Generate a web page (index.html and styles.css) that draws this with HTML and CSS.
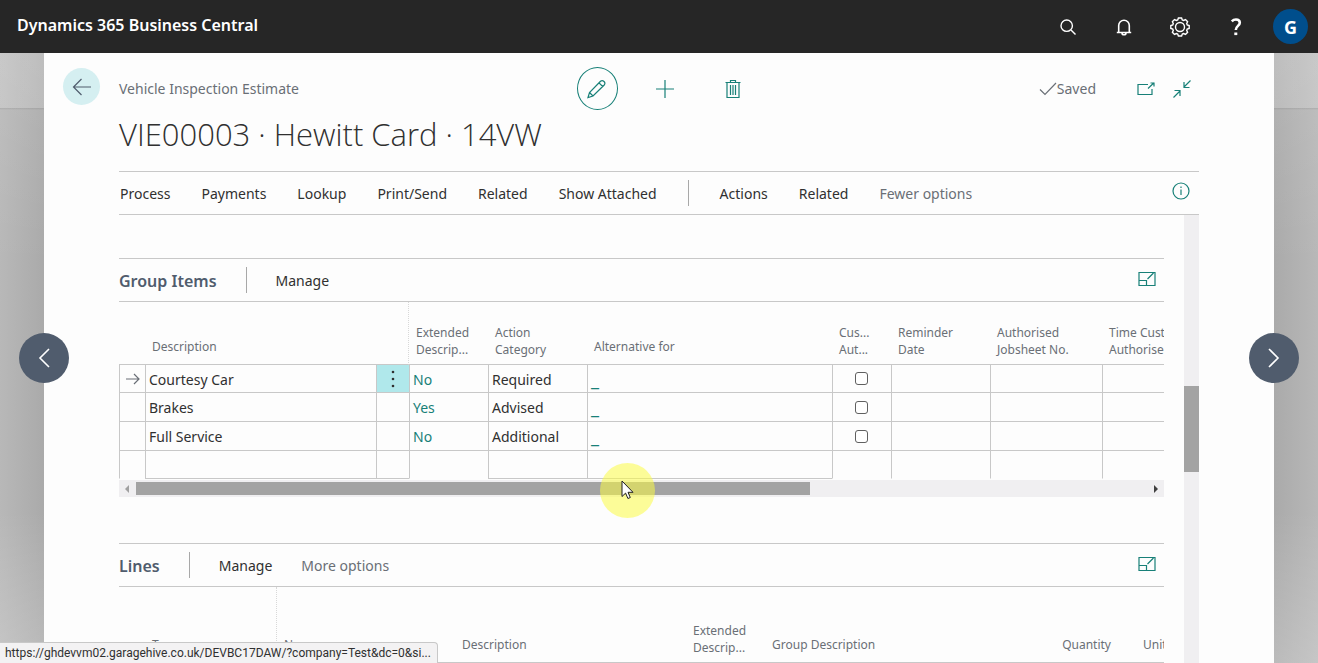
FILE: index.html
```html
<!DOCTYPE html>
<html lang="en">
<head>
<meta charset="utf-8">
<title>Vehicle Inspection Estimate - Dynamics 365 Business Central</title>
<link rel="stylesheet" href="styles.css">
</head>
<body>
<header class="topbar">
  <a class="brand" href="#">Dynamics 365 Business Central</a>
  <div class="topbar-tools">
    <button class="tool" aria-label="Search"><svg width="18" height="18" viewBox="0 0 18 18"><circle cx="7.7" cy="7.7" r="5.7"/><path d="M12 12l4.500 4.500"/></svg></button>
    <button class="tool" aria-label="Notifications"><svg class="bell" width="18" height="18" viewBox="0 0 18 18"><path d="M1.800 14.500H16.200M3.700 14.500V7.500a5.300 5.300 0 0 1 10.600 0v7M7 15a2 1.800 0 0 0 4 0"/></svg></button>
    <button class="tool" aria-label="Settings"><svg width="20" height="20" viewBox="0 0 20 20"><circle cx="10" cy="10" r="4.500"/><path d="M8.400 1h3.200l.7 2 1.300.5 1.900-.9 2.100 2.100-.9 1.900.5 1.300 2 .7v2.800l-2 .7-.5 1.300.9 1.900-2.100 2.100-1.900-.9-1.300.5-.7 2H8.400l-.7-2-1.300-.5-1.900.9-2.100-2.100.9-1.900-.5-1.300-2-.7V8.600l2-.7.5-1.300-.9-1.900 2.100-2.100 1.900.9L7.700 3z"/></svg></button>
    <button class="tool" aria-label="Help"><svg class="help" width="14" height="20" viewBox="0 0 14 20"><path d="M2.800 4.300Q4.500 2.500 7 2.500q3.800 0 3.800 3.200c0 3.200-4 3.300-4 7.300"/><path d="M5.300 16.800h3"/></svg></button>
    <button class="avatar" aria-label="Account">G</button>
  </div>
</header>
<main class="stage">
  <article class="card">
    <div class="back-col"><button class="back" aria-label="Back"><svg width="20" height="18" viewBox="0 0 20 18"><path d="M19 9H1.500M9.500 1L1.500 9l8 8"/></svg></button></div>
    <div class="page">
      <div class="page-head">
        <span class="caption">Vehicle Inspection Estimate</span>
        <div class="page-actions">
          <button class="round ringed" aria-label="Edit"><svg width="20" height="20" viewBox="0 0 20 20"><path d="M1 18.500l1.500-5L13.500 2.300q1.700-1.500 3.500.2 1.700 1.700.2 3.500L6 17zM2.500 13.500L6 17M12 3.800L15.700 7.500"/></svg></button>
          <button class="round" aria-label="New"><svg width="20" height="20" viewBox="0 0 20 20"><path d="M10 1v18M1 10h18"/></svg></button>
          <button class="round" aria-label="Delete"><svg width="16" height="20" viewBox="0 0 16 20"><path d="M.5 3.500h15M5.500 3V1.500h5V3M2 3.500v15h12v-15M5.500 6v10M8 6v10M10.500 6v10"/></svg></button>
        </div>
        <div class="page-state">
          <span class="saved"><svg width="18" height="14" viewBox="0 0 18 14"><path d="M1 7.500l5 5L17 1"/></svg>Saved</span>
          <button class="mini" aria-label="Open in new window"><svg width="18" height="14" viewBox="0 0 18 14"><path d="M11 2.500H1v10h14V7M11 6.500L17 .8M13.500 1H17v3.500"/></svg></button>
          <button class="mini" aria-label="Collapse"><svg width="18" height="18" viewBox="0 0 18 18"><path d="M17.500.5L11 7M11 2v5.500h5.500M.5 17.500L7 11M1.500 10.500H7V16"/></svg></button>
        </div>
      </div>
      <h1 class="title">VIE00003 · Hewitt Card · 14VW</h1>
      <nav class="menu">
        <button>Process</button><button>Payments</button><button>Lookup</button><button>Print/Send</button><button>Related</button><button>Show Attached</button>
        <span class="divider"></span>
        <button>Actions</button><button>Related</button><button class="muted">Fewer options</button>
        <button class="mini info" aria-label="Information"><svg width="18" height="18" viewBox="0 0 18 18"><circle cx="9" cy="9" r="8"/><path d="M9 7.500V13M9 4.500V6"/></svg></button>
      </nav>
      <div class="scroller">
        <div class="parts">
          <section class="part">
            <div class="part-head">
              <h2>Group Items</h2><span class="divider"></span><button>Manage</button>
              <button class="mini expand" aria-label="Expand Group Items"><svg width="18" height="16" viewBox="0 0 18 16"><path d="M1 1.500h16v13H1zM1 9.500h7.500v5M9.500 8l6-6M11.500 1.500H17V6"/></svg></button>
            </div>
            <div class="grid-wrap">
              <table class="grid">
                <colgroup><col class="w26"><col class="w231"><col class="w33"><col class="w79"><col class="w99"><col class="w245"><col class="w59"><col class="w99"><col class="w112"><col></colgroup>
                <thead><tr>
                  <th></th><th class="one">Description</th><th class="frozen"></th><th>Extended<br>Descrip...</th><th>Action<br>Category</th><th class="one">Alternative for</th><th>Cus...<br>Aut...</th><th>Reminder<br>Date</th><th>Authorised<br>Jobsheet No.</th><th>Time Customer<br>Authorised</th>
                </tr></thead>
                <tbody>
                  <tr><td class="mark"><svg width="14" height="12" viewBox="0 0 14 12"><path d="M0 6h13M8 1l5 5-5 5"/></svg></td><td>Courtesy Car</td><td class="more"><button aria-label="More"><svg width="4" height="18" viewBox="0 0 4 18"><circle cx="2" cy="2" r="1.300"/><circle cx="2" cy="9" r="1.300"/><circle cx="2" cy="16" r="1.300"/></svg></button></td><td><a href="#">No</a></td><td>Required</td><td><a class="blank-link" href="#">_</a></td><td class="tick"><input type="checkbox" aria-label="Customer authorised, Courtesy Car"></td><td></td><td></td><td></td></tr>
                  <tr><td></td><td>Brakes</td><td></td><td><a href="#">Yes</a></td><td>Advised</td><td><a class="blank-link" href="#">_</a></td><td class="tick"><input type="checkbox" aria-label="Customer authorised, Brakes"></td><td></td><td></td><td></td></tr>
                  <tr><td></td><td>Full Service</td><td></td><td><a href="#">No</a></td><td>Additional</td><td><a class="blank-link" href="#">_</a></td><td class="tick"><input type="checkbox" aria-label="Customer authorised, Full Service"></td><td></td><td></td><td></td></tr>
                  <tr class="blank"><td></td><td class="edit"></td><td class="edit"></td><td></td><td class="edit"></td><td class="edit"></td><td></td><td></td><td></td><td></td></tr>
                </tbody>
              </table>
            </div>
            <div class="hscroll">
              <svg class="arrow off" width="6" height="8" viewBox="0 0 6 8"><path d="M5 0v8L1 4z"/></svg>
              <div class="htrack"><div class="hthumb"></div></div>
              <svg class="arrow" width="6" height="8" viewBox="0 0 6 8"><path d="M1 0v8l4-4z"/></svg>
            </div>
          </section>
          <section class="part">
            <div class="part-head">
              <h2>Lines</h2><span class="divider"></span><button>Manage</button><button class="muted">More options</button>
              <button class="mini expand" aria-label="Expand Lines"><svg width="18" height="16" viewBox="0 0 18 16"><path d="M1 1.500h16v13H1zM1 9.500h7.500v5M9.500 8l6-6M11.500 1.500H17V6"/></svg></button>
            </div>
            <div class="grid-wrap">
              <table class="grid lines">
                <colgroup><col class="w26"><col class="w132"><col class="w178"><col class="w231"><col class="w79"><col class="w245"><col class="w108"><col></colgroup>
                <thead><tr><th></th><th class="one frozen">Type</th><th class="one">No.</th><th class="one">Description</th><th>Extended<br>Descrip...</th><th class="one">Group Description</th><th class="one num">Quantity</th><th class="one unit">Unit Price</th></tr></thead>
                <tbody><tr><td></td><td></td><td></td><td></td><td></td><td></td><td></td><td></td></tr></tbody>
              </table>
            </div>
          </section>
        </div>
        <div class="vtrack"><div class="vthumb"></div></div>
      </div>
    </div>
  </article>
  <button class="pager prev" aria-label="Previous"><svg width="12" height="20" viewBox="0 0 12 20"><path d="M11 1L2 10l9 9"/></svg></button>
  <button class="pager next" aria-label="Next"><svg width="12" height="20" viewBox="0 0 12 20"><path d="M1 1l9 9-9 9"/></svg></button>
</main>
<div class="pointer"><svg width="13" height="20" viewBox="0 0 13 20"><path d="M1 1v15.500l3.600-3.400 2.300 5.400 2.400-1-2.300-5.200h5z"/></svg></div>
<div class="status">https://ghdevvm02.garagehive.co.uk/DEVBC17DAW/?company=Test&amp;dc=0&amp;si...</div>
</body>
</html>
```
FILE: styles.css
```css
* { box-sizing: border-box; }
body {
  margin: 0;
  height: 100vh;
  display: flex;
  flex-direction: column;
  overflow: hidden;
  position: relative;
  font: 14px/20px "Noto Sans", "Open Sans", sans-serif;
  color: #303030;
}
button {
  border: 0;
  padding: 0;
  background: none;
  font: inherit;
  color: inherit;
  white-space: nowrap;
}
svg { display: block; fill: none; stroke: currentColor; stroke-width: 1.2; }
a { color: #188078; text-decoration: none; }

.topbar {
  flex: none;
  height: 53px;
  display: flex;
  align-items: center;
  justify-content: space-between;
  padding: 0 10px 0 17px;
  background: #262626;
  color: #fff;
}
.brand { color: #fff; font-size: 16px; font-weight: 600; padding-bottom: 4px; }
.topbar-tools { display: flex; align-items: center; }
.tool { width: 56px; height: 40px; display: grid; place-items: center; }
.tool svg { stroke-width: 1.4; }
.tool .bell { stroke-width: 1.6; }
.tool .help { stroke-width: 2.6; }
.avatar {
  width: 35px;
  height: 35px;
  margin-left: 9px;
  border-radius: 50%;
  background: #004e8c;
  font-size: 18px;
  font-weight: 700;
}

.stage {
  flex: 1;
  min-height: 0;
  position: relative;
  padding: 0 44px;
  background:
    linear-gradient(rgba(255,255,255,.15) 55px, rgba(80,80,80,.15) 55px, transparent 57px),
    linear-gradient(rgba(255,255,255,.1), transparent 35%, transparent 75%, rgba(255,255,255,.2)),
    linear-gradient(90deg, #b8b8b8, #aaa 44px, #aaa calc(100% - 44px), #b8b8b8);
}
.card {
  height: 100%;
  display: grid;
  grid-template-columns: 75px minmax(0, 1fr);
  padding-right: 75px;
  background: #fdfdfd;
}
.back-col { padding: 15px 0 0 19px; }
.back {
  width: 37px;
  height: 37px;
  border-radius: 50%;
  background: #d5eff1;
  color: #505c6d;
  display: grid;
  place-items: center;
}
.page { display: flex; flex-direction: column; min-height: 0; }
.page-head {
  display: grid;
  grid-template-columns: 1fr auto 1fr;
  align-items: center;
  padding-top: 14px;
}
.caption, .muted { color: #6a6f76; }
.page-actions { display: flex; gap: 27px; padding-left: 12px; color: #188078; }
.round {
  width: 41px;
  height: 43px;
  border-radius: 50%;
  display: grid;
  place-items: center;
}
.ringed { border: 1px solid #188078; }
.page-state {
  display: flex;
  align-items: center;
  justify-content: flex-end;
  gap: 18px;
  padding-right: 8px;
}
.saved { display: flex; align-items: center; color: #6a6f76; padding-right: 23px; }
.mini { color: #188078; }
.title {
  margin: 0;
  height: 61px;
  font-family: "Open Sans", "Noto Sans", sans-serif;
  font-size: 31px;
  line-height: 48px;
  font-weight: 300;
}
.menu {
  flex: none;
  display: flex;
  align-items: center;
  gap: 31px;
  height: 44px;
  padding: 2px 0 0 1px;
  border-top: 1px solid #c8c8c8;
  border-bottom: 1px solid #c8c8c8;
}
.divider { width: 1px; height: 26px; margin-bottom: 2px; background: #a8a8a8; }
.info { margin: 0 9px 6px auto; }

.scroller { flex: 1; min-height: 0; display: flex; gap: 20px; }
.parts { flex: 1; min-width: 0; overflow: hidden; padding-top: 43px; }
.part { margin-bottom: 46px; }
.part-head {
  display: flex;
  align-items: center;
  gap: 29px;
  height: 44px;
  padding-top: 2px;
  border-top: 1px solid #c8c8c8;
  border-bottom: 1px solid #c8c8c8;
}
.part-head h2 { margin: 0; font-size: 16px; font-weight: 600; color: #505c6d; }
.expand { margin: 0 8px 4px auto; }
.grid-wrap { overflow: hidden; }
.grid {
  width: 100%;
  min-width: 1090px;
  table-layout: fixed;
  border-collapse: separate;
  border-spacing: 0;
}
.w26 { width: 26px; }
.w33 { width: 33px; }
.w59 { width: 59px; }
.w79 { width: 79px; }
.w99 { width: 99px; }
.w108 { width: 108px; }
.w112 { width: 112px; }
.w132 { width: 132px; }
.w178 { width: 178px; }
.w231 { width: 231px; }
.w245 { width: 245px; }
.grid th {
  height: 63px;
  padding: 0 7px 6px;
  vertical-align: bottom;
  text-align: left;
  font-size: 12px;
  line-height: 17px;
  font-weight: 400;
  white-space: nowrap;
  color: #6a6f76;
  border-bottom: 1px solid #c8c8c8;
}
.grid .one { padding-bottom: 9px; }
.grid .frozen { border-right: 1px dotted #d8d8d8; }
.grid .num { text-align: right; }
.grid .unit { padding-left: 25px; }
.lines th { height: 76px; }
.grid td {
  height: 29px;
  padding: 2px 3px 0;
  border-left: 1px solid #c8c8c8;
  border-bottom: 1px solid #c8c8c8;
  white-space: nowrap;
}
.grid tbody tr:first-child td, .grid .blank td { height: 28px; }
.grid .blank td { border-bottom-color: transparent; }
.grid .blank .edit { border-bottom-color: #c8c8c8; }
.grid .mark { padding: 0 0 0 6px; color: #6a6f76; }
.grid .more { padding: 0; background: #b0e8eb; }
.more button { width: 32px; height: 27px; display: grid; place-items: center; }
.more svg { fill: #303030; stroke: none; }
.blank-link { font-size: 18px; line-height: 20px; }
.grid .tick { padding: 0 4px 0 3px; }
.tick input {
  appearance: none;
  display: block;
  width: 13px;
  height: 13px;
  margin: 0 auto;
  border: 1px solid #606060;
  border-radius: 3px;
  background: #fff;
}
.hscroll {
  display: flex;
  align-items: center;
  gap: 6px;
  height: 17px;
  margin-top: 1px;
  padding: 0 5px;
  background: #f0eff1;
}
.arrow { fill: #404040; stroke: none; }
.off { fill: #a0a0a0; }
.htrack { flex: 1; }
.hthumb { width: 66%; min-width: 674px; height: 13px; background: #a3a3a3; }
.vtrack { flex: none; width: 15px; padding-top: 171px; background: #f0eff1; }
.vthumb { height: 86px; background: #a3a3a3; }

.pager {
  position: absolute;
  top: 280px;
  width: 50px;
  height: 50px;
  border-radius: 50%;
  background: #505c6d;
  color: #fff;
  display: grid;
  place-items: center;
}
.pager svg { stroke-width: 1.6; }
.prev { left: 19px; }
.next { right: 19px; }

.pointer {
  position: absolute;
  left: 600px;
  top: 463px;
  width: 55px;
  height: 55px;
  padding: 17px 0 0 21px;
  border-radius: 50%;
  background: rgba(252, 252, 70, .55);
}
.pointer svg { fill: #fff; stroke: #202020; stroke-width: 1; }
.status {
  position: absolute;
  left: 0;
  bottom: 0;
  height: 21px;
  width: 438px;
  padding: 0 5px;
  border: solid #c8c8c8;
  border-width: 1px 1px 0 0;
  border-radius: 0 4px 0 0;
  background: #f3f2f3;
  color: #303030;
  font-family: Roboto, "Open Sans", sans-serif;
  font-size: 12px;
  line-height: 20px;
  white-space: nowrap;
}
```
